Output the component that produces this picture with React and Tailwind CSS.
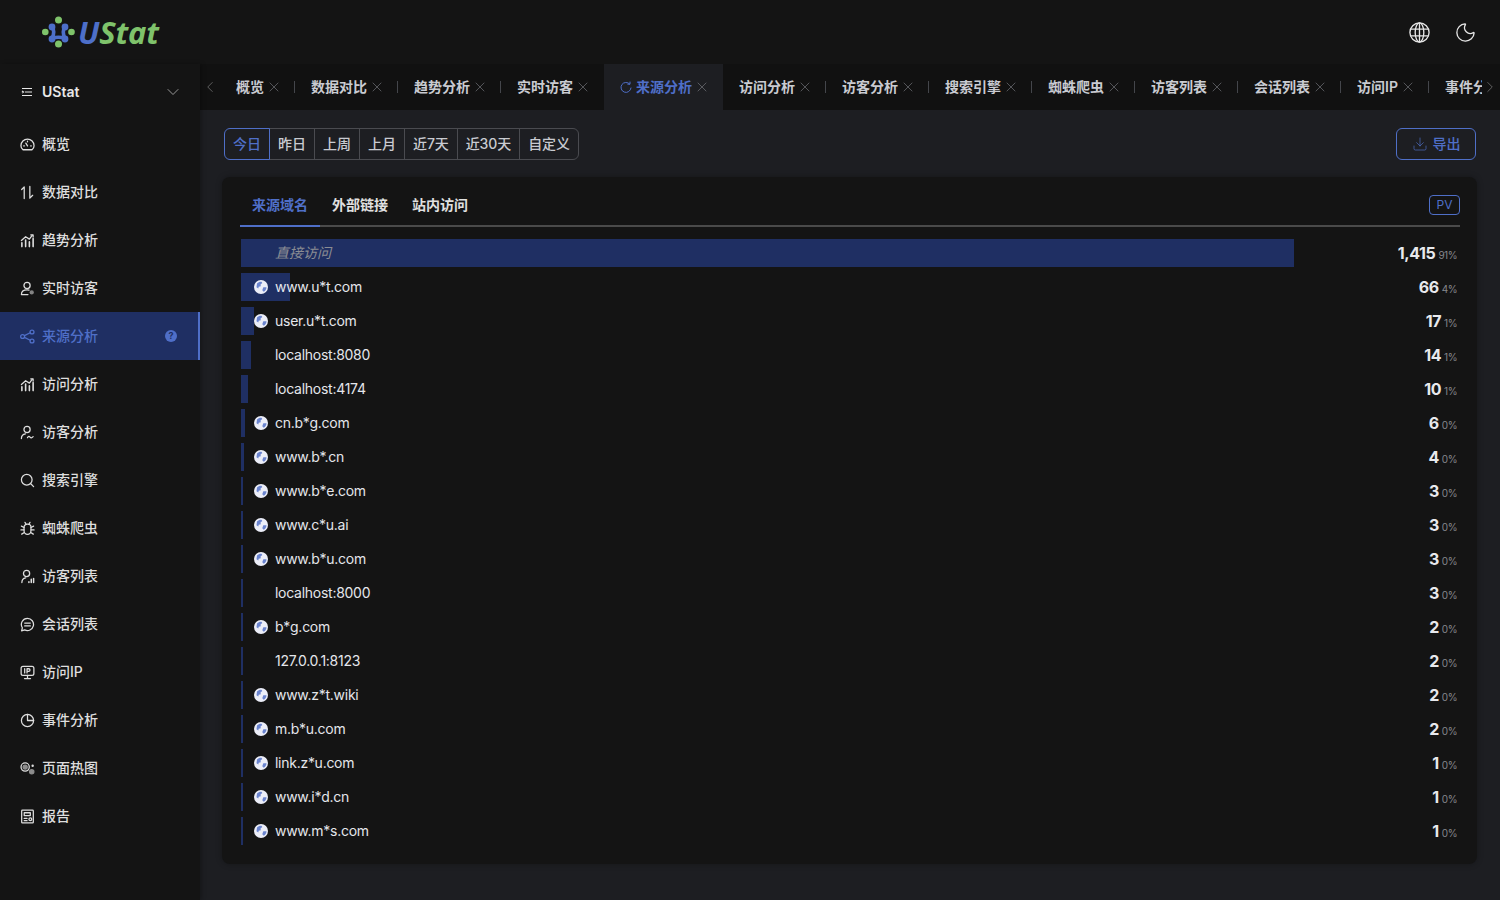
import React from 'react'
import { ChevronDown, ChevronLeft, ChevronRight, X, Download, Moon } from 'lucide-react'

const Ico = ({ children, className = 'w-[15px] h-[15px]' }) => (
    <svg viewBox="0 0 16 16" fill="none" stroke="currentColor" strokeWidth="1.350" strokeLinecap="round" strokeLinejoin="round" className={className}>
        {children}
    </svg>
)

const icons = {
    gauge: <><path d="M3.2 13.6h9.6c1.3-1.1 2.2-2.6 2.2-4.4a7 7 0 0 0-14 0c0 1.800.9 3.300 2.200 4.400z" /><path d="M8 9.500 6.200 6.500M4 9.500h.6M11.400 9.500h.6M8 4.500v.6" /></>,
    compare: <><path d="M4.500 14.500V2L1.800 4.800" /><path d="M10.500 1.500V14l3-3" /></>,
    trend: <><path d="M2 14.500v-4M6 14.500V7.500M10 14.500v-5M14 14.500V6" strokeWidth="1.700" /><path d="M1.500 8 6 4l4 2.500L13 2.500" /><path d="M11.500 2H14v2.300" /></>,
    live: <><circle cx="7.500" cy="4.800" r="3.300" /><path d="M1.500 14.500c0-3 2.500-5 6-5 .8 0 1.500.1 2.100.3M1.500 14.500h7" /><circle cx="12.500" cy="12.200" r="2.300" fill="currentColor" opacity=".55" stroke="none" /></>,
    share: <><circle cx="2.800" cy="8" r="2.100" /><circle cx="12.800" cy="3.200" r="2.100" /><circle cx="12.800" cy="12.800" r="2.100" /><path d="M4.700 7.100 10.900 4M4.700 8.900l6.200 3.100" /></>,
    visitor: <><circle cx="7.500" cy="4.800" r="3.300" /><path d="M1.500 14.500c0-2.700 1.700-4.600 4.300-5" /><path d="M8 13.500c1-1.600 1.800-1.600 2.700-.5s1.600 1 3.300-.6" /></>,
    search: <><circle cx="7.200" cy="7.200" r="5.700" /><path d="m11.500 11.500 3 3" /></>,
    bug: <><path d="M4.300 6.500c0-1.800 1.600-3.200 3.700-3.200s3.700 1.400 3.700 3.200v4c0 2-1.600 3.800-3.700 3.800s-3.700-1.800-3.700-3.800z" /><path d="M5.300 1.500 6.500 3.500M10.700 1.500 9.500 3.500M1.500 5.500l2.800 1.500M14.500 5.500 11.700 7M1 9.500h3.300M15 9.500h-3.300M1.800 14l2.800-1.800M14.200 14l-2.800-1.800" /></>,
    list: <><circle cx="7" cy="4.800" r="3.300" /><path d="M2 14.500c0-2.700 1.500-4.600 4-5" /><path d="M9.500 14.500v-1M12 14.500v-3.500M14.500 14.500V10" strokeWidth="1.600" /></>,
    chat: <><path d="M8 1.500a6.500 6.500 0 1 1-3 12.300l-3.300.9.800-3.200A6.500 6.500 0 0 1 8 1.500z" /><path d="M5 6.500h6M5 9.500h6" /></>,
    ip: <><rect x="1.200" y="1.500" width="13.600" height="9.500" rx="2" /><path d="M8 11v3M4.800 14.500h6.400" /><path d="M5 4v4.500M7.500 8.500V4h1.800a1.300 1.300 0 0 1 0 2.700H7.500" /></>,
    pie: <><path d="M14.500 8A6.500 6.500 0 1 1 8 1.500V8z" /><path d="M8 1.500A6.500 6.500 0 0 1 14.500 8" /></>,
    heat: <><circle cx="5.500" cy="6.500" r="4.400" /><circle cx="5.500" cy="6.500" r="2.200" fill="currentColor" opacity=".6" /><circle cx="13.500" cy="5" r="1.300" fill="currentColor" stroke="none" /><circle cx="12.500" cy="11.500" r="2.300" fill="currentColor" opacity=".6" /></>,
    report: <><rect x="1.800" y="1.200" width="12.400" height="13.600" rx=".8" /><path d="M4.500 4h6.500v3H4.500zM4.500 10h3M4.500 12.500h3" /><circle cx="11" cy="11" r="1.500" /></>,
}

const menu = [
    ['概览', 'gauge'], ['数据对比', 'compare'], ['趋势分析', 'trend'], ['实时访客', 'live'],
    ['来源分析', 'share', true], ['访问分析', 'trend'], ['访客分析', 'visitor'], ['搜索引擎', 'search'],
    ['蜘蛛爬虫', 'bug'], ['访客列表', 'list'], ['会话列表', 'chat'], ['访问IP', 'ip'],
    ['事件分析', 'pie'], ['页面热图', 'heat'], ['报告', 'report'],
]

const tabs = [
    ['概览'], ['数据对比'], ['趋势分析'], ['实时访客', false, true], ['来源分析', true], ['访问分析'], ['访客分析'],
    ['搜索引擎'], ['蜘蛛爬虫'], ['访客列表'], ['会话列表'], ['访问IP'], ['事件分析'],
]

const ranges = ['今日', '昨日', '上周', '上月', '近7天', '近30天', '自定义']

const rows = [
    ['直接访问', 1415, '91%', false], ['www.u*t.com', 66, '4%', true], ['user.u*t.com', 17, '1%', true],
    ['localhost:8080', 14, '1%', false], ['localhost:4174', 10, '1%', false], ['cn.b*g.com', 6, '0%', true],
    ['www.b*.cn', 4, '0%', true], ['www.b*e.com', 3, '0%', true], ['www.c*u.ai', 3, '0%', true],
    ['www.b*u.com', 3, '0%', true], ['localhost:8000', 3, '0%', false], ['b*g.com', 2, '0%', true],
    ['127.0.0.1:8123', 2, '0%', false], ['www.z*t.wiki', 2, '0%', true], ['m.b*u.com', 2, '0%', true],
    ['link.z*u.com', 1, '0%', true], ['www.i*d.cn', 1, '0%', true], ['www.m*s.com', 1, '0%', true],
]

const Logo = () => (
    <div className="flex items-center gap-[3px]">
        <svg viewBox="0 0 34 34" className="w-[34px] h-[34px]">
            <g fill="#7fc36b">
                <circle cx="17.500" cy="5" r="3.500" />
                <circle cx="4.300" cy="17" r="3.300" />
                <circle cx="30.500" cy="17" r="3.300" />
                <circle cx="17.500" cy="29" r="3.500" />
            </g>
            <g fill="none" stroke="#4d6fc9" strokeWidth="3.600" strokeLinecap="round">
                <path d="M11 12c1.800 2.500 2.500 7-.2 11.500" />
                <path d="M24 12c-1.800 2.500-2.500 7 .2 11.500" />
                <path d="M11 23.500c4.500-1.800 8.500-1.800 13 0" />
            </g>
            <circle cx="11" cy="12" r="3.400" fill="#4d6fc9" />
            <circle cx="24" cy="12" r="3.400" fill="#4d6fc9" />
            <circle cx="11" cy="24" r="3.400" fill="#4d6fc9" />
            <circle cx="24" cy="24" r="3.400" fill="#4d6fc9" />
        </svg>
        <span className="text-[31px] leading-none font-bold italic tracking-[-0.2px] font-['Open_Sans',sans-serif]">
            <span className="text-[#4d6fc9]">U</span>
            <span className="text-[#7fc36b]">Stat</span>
        </span>
    </div>
)

const SiteIcon = () => (
    <svg viewBox="0 0 14 14" className="w-[14px] h-[14px] shrink-0">
        <circle cx="7" cy="7" r="7" fill="#eceef8" />
        <path d="M3 3.500C4.500 2 6 1.500 7.500 1.800L8.300 3 6.500 4.500 6.800 6.300 4.700 6.800 4.300 8.500 2.500 7.200z" fill="#6a84cf" />
        <path d="M9.300 7.300h3.200c0 1.800-1 3.500-2.800 4.500L8.300 10.300z" fill="#6a84cf" />
    </svg>
)

const App = () => {
    return (
        <div className="w-[1500px] h-[900px] overflow-hidden flex flex-col bg-[#1d1e22] text-[#dfe1e6] font-['Inter','Noto_Sans_CJK_SC',sans-serif]">
            {/* Top bar */}
            <header className="h-[64px] shrink-0 flex items-center justify-between pl-[41px] pr-[23px] bg-[#141414]">
                <Logo />
                <div className="flex items-center gap-[23px] text-[#e5e5e5]">
                    <svg viewBox="0 0 24 24" fill="none" stroke="currentColor" strokeWidth="1.400" className="w-[23px] h-[23px]">
                        <circle cx="12" cy="12" r="10" />
                        <ellipse cx="12" cy="12" rx="4.500" ry="10" />
                        <path d="M12 2v20M2.700 8.500h18.600M2.700 15.500h18.600" />
                    </svg>
                    <Moon className="w-[23px] h-[23px]" strokeWidth={1.400} />
                </div>
            </header>

            <div className="flex-1 flex min-h-0">
                {/* Sidebar */}
                <aside className="w-[200px] shrink-0 bg-[#141414] shadow-[2px_0_4px_rgba(0,0,0,0.25)] z-10 text-sm">
                    <div className="h-[56px] flex items-center pl-[21px] pr-[17px] font-semibold text-[#e8e8e8]">
                        <svg viewBox="0 0 12 12" fill="none" stroke="currentColor" strokeWidth="1.200" className="w-[12px] h-[12px] mr-[9px]">
                            <path d="M1 2.500h10M4 6h7M1 9.500h10M1 5l1.500 1L1 7" />
                        </svg>
                        <span className="flex-1">UStat</span>
                        <ChevronDown className="w-[20px] h-[20px] text-[#b0b0b0]" strokeWidth={1} />
                    </div>
                    {menu.map(([label, icon, active]) => (
                        <div
                            key={label}
                            className={`h-[48px] flex items-center pl-[20px] pr-[21px] gap-[7px] font-medium ${active ? 'bg-[#1f2f63] text-[#4f6fc8] border-r-2 border-[#4f6fc8]' : 'text-[#dedede]'}`}
                        >
                            <Ico>{icons[icon]}</Ico>
                            <span className="flex-1">{label}</span>
                            {active && (
                                <span className="w-[12px] h-[12px] rounded-full bg-[#4f6fc8] text-[#1f2f63] text-[9px] font-bold flex items-center justify-center">?</span>
                            )}
                        </div>
                    ))}
                </aside>

                <div className="flex-1 min-w-0 flex flex-col">
                    {/* Open pages */}
                    <div className="h-[46px] shrink-0 flex items-center bg-[#111111] text-sm font-semibold text-[#c9cbd1]">
                        <div className="w-[20px] shrink-0 flex justify-center text-[#777]">
                            <ChevronLeft className="w-[18px] h-[18px] -ml-[1px]" strokeWidth={1} />
                        </div>
                        <div className="w-[1262px] shrink-0 overflow-hidden flex h-full">
                            {tabs.map(([label, active, noSep], i) => (
                                <div key={label} className={`relative shrink-0 h-full flex items-center pl-[16px] pr-[16px] ${active ? 'bg-[#1d1e22] text-[#4f6fc8]' : ''}`}>
                                    {active && (
                                        <svg viewBox="0 0 12 12" fill="none" stroke="currentColor" strokeWidth="1" strokeLinecap="round" className="w-[12px] h-[12px] mr-[4px]">
                                            <path d="M9.700 3A5 5 0 1 0 11 7" />
                                            <path d="M10 1v2.200H7.800" />
                                        </svg>
                                    )}
                                    <span>{label}</span>
                                    <span className="w-[10px] h-[10px] ml-[5px] flex items-center justify-center text-[#77797f]">
                                        <X className="w-[16px] h-[16px] shrink-0" strokeWidth={1} />
                                    </span>
                                    {!active && !noSep && i < tabs.length - 1 && (
                                        <span className="absolute right-0 top-[17px] w-px h-[12px] bg-[#44464b]" />
                                    )}
                                </div>
                            ))}
                        </div>
                        <div className="flex-1 flex justify-center text-[#777]">
                            <ChevronRight className="w-[18px] h-[18px] -ml-[2px]" strokeWidth={1} />
                        </div>
                    </div>

                    <main className="flex-1 min-h-0 pl-[22px] pr-[23px] pt-[18px]">
                        {/* Date range and export */}
                        <div className="flex items-center justify-between pl-[2px] pr-px">
                            <div className="flex h-[32px] text-sm font-medium text-[#c9cbd1]">
                                {ranges.map((r, i) => (
                                    <button
                                        key={r}
                                        className={`px-[8px] -ml-px first:ml-0 border first:rounded-l-md last:rounded-r-md ${/\d/.test(r) ? 'tracking-[-0.1px]' : ''} ${i === 0 ? 'relative z-10 border-[#4f6fc8] text-[#4f6fc8]' : 'border-[#4a4b50]'}`}
                                    >
                                        {r}
                                    </button>
                                ))}
                            </div>
                            <button className="w-[80px] h-[32px] flex items-center justify-center gap-[5px] border border-[#4f6fc8] rounded-md text-sm font-medium text-[#4f6fc8]">
                                <Download className="w-[16px] h-[16px]" strokeWidth={1} />
                                导出
                            </button>
                        </div>

                        {/* Referrer card */}
                        <section className="mt-[17px] h-[687px] rounded-lg bg-[#141414] shadow-[0_0_6px_rgba(0,0,0,0.3)] pt-[18px] pl-[18px] pr-[17px]">
                            <div className="flex items-start justify-between h-[32px] border-b-2 border-[#4a4a4a] text-sm font-semibold text-[#e0e0e0]">
                                <div className="flex h-[32px]">
                                    <div className="px-[12px] h-[32px] text-[#4f6fc8] border-b-2 border-[#4f6fc8]">来源域名</div>
                                    <div className="px-[12px]">外部链接</div>
                                    <div className="px-[12px]">站内访问</div>
                                </div>
                                <span className="w-[31px] h-[20px] flex items-center justify-center border border-[#4f6fc8] rounded-[4px] text-xs font-normal text-[#4f6fc8]">PV</span>
                            </div>

                            <div className="mt-[12px] ml-px flex flex-col gap-[6px]">
                                {rows.map(([name, pv, pct, hasIcon]) => (
                                    <div key={name} className="relative h-[28px] flex items-center text-sm text-[#e4e6eb]">
                                        <div className="absolute left-0 top-0 h-full bg-[#1f2f63]" style={{ width: `${Math.max((pv / 1415) * 1053, 1.500)}px` }} />
                                        <div className="relative flex-1 flex items-center pl-[13px] gap-[7px]">
                                            {hasIcon ? <SiteIcon /> : <span className="w-[14px] shrink-0" />}
                                            <span className={pv === 1415 ? 'italic text-[#8b8d93]' : 'tracking-[-0.27px]'}>{name}</span>
                                        </div>
                                        <div className="relative flex items-baseline pr-[3px] gap-[3px]">
                                            <span className="text-[16px] font-bold tracking-[-0.4px] text-[#e8e9ed]">{pv.toLocaleString('en-US')}</span>
                                            <span className="text-[10px] tracking-[-0.5px] text-[#85878c]">{pct}</span>
                                        </div>
                                    </div>
                                ))}
                            </div>
                        </section>
                    </main>
                </div>
            </div>
        </div>
    )
}

export default App
